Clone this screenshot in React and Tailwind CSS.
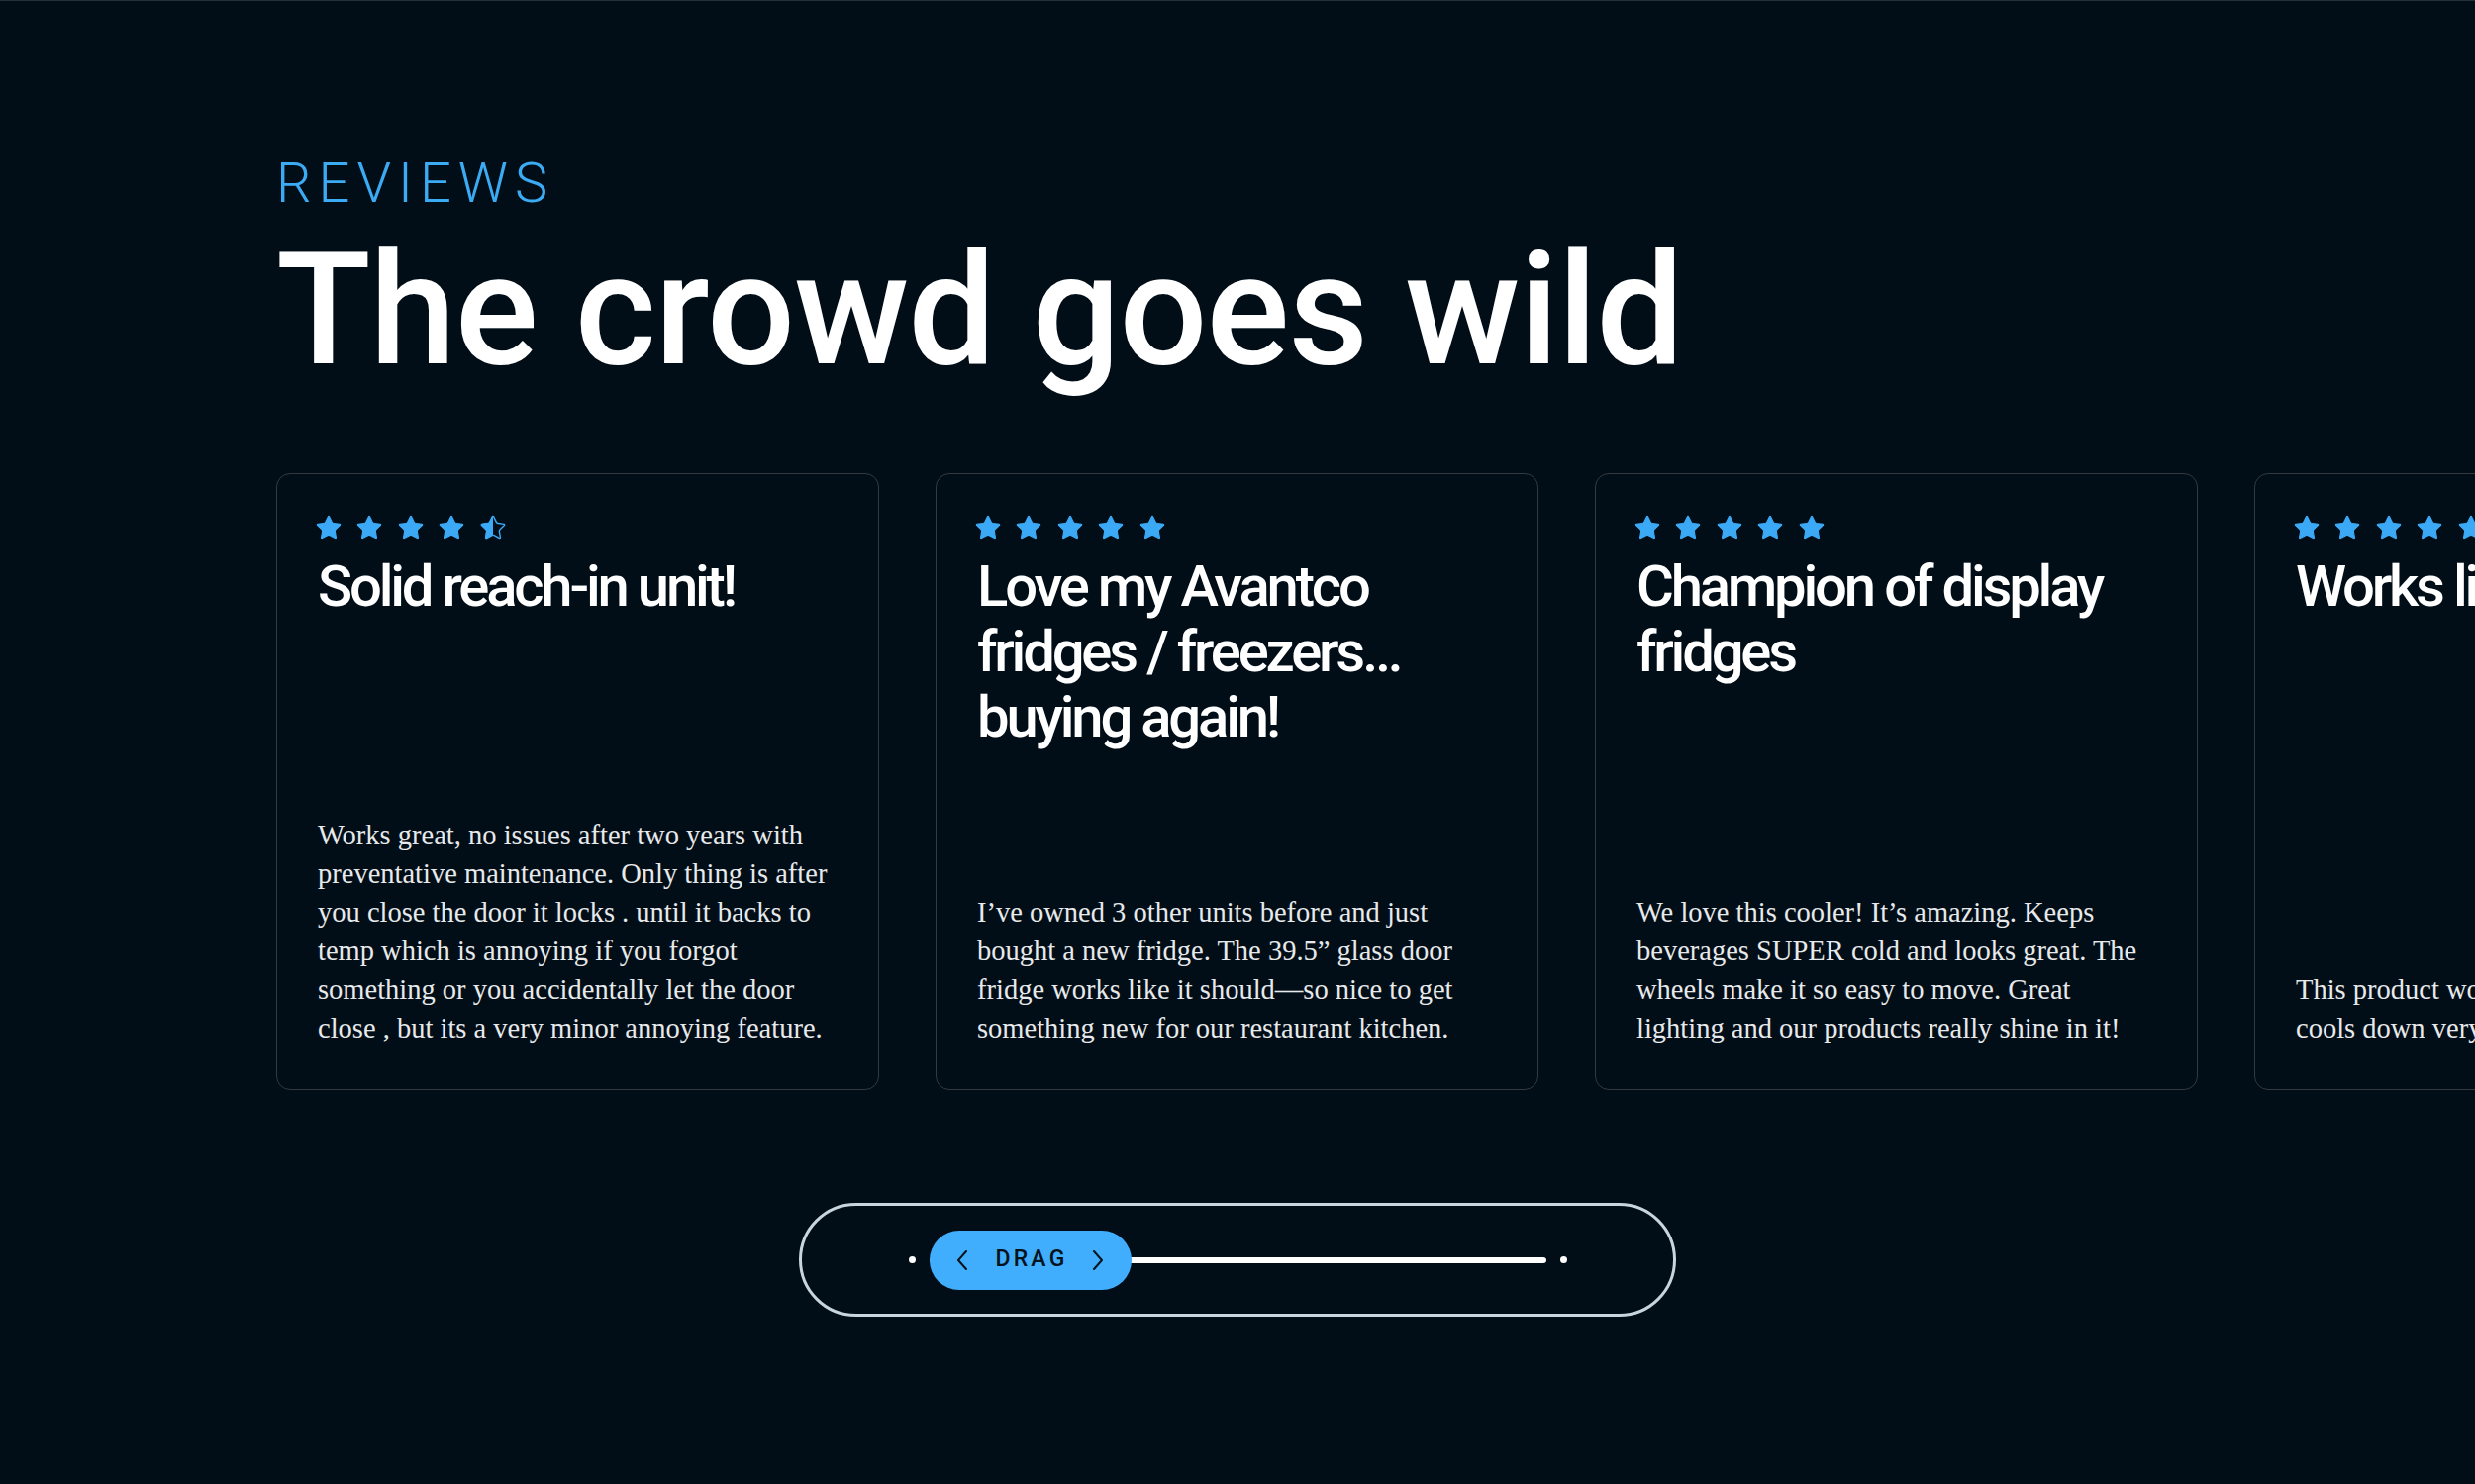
import React from 'react';

const REVIEWS = [
  {
    rating: 4.5,
    title: 'Solid reach-in unit!',
    body: 'Works great, no issues after two years with preventative maintenance. Only thing is after you close the door it locks . until it backs to temp which is annoying if you forgot something or you accidentally let the door close , but its a very minor annoying feature.',
  },
  {
    rating: 5,
    title: 'Love my Avantco fridges / freezers… buying again!',
    body: 'I’ve owned 3 other units before and just bought a new fridge. The 39.5” glass door fridge works like it should—so nice to get something new for our restaurant kitchen.',
  },
  {
    rating: 5,
    title: 'Champion of display fridges',
    body: 'We love this cooler! It’s amazing. Keeps beverages SUPER cold and looks great. The wheels make it so easy to move. Great lighting and our products really shine in it!',
  },
  {
    rating: 5,
    title: 'Works like a charm',
    body: ['This product works great and', 'cools down very quickly.'],
  },
];

const STAR_D =
  'M11.525 2.295a.53.53 0 0 1 .95 0l2.31 4.679a2.123 2.123 0 0 0 1.595 1.16l5.166.756a.53.53 0 0 1 .294.904l-3.736 3.638a2.123 2.123 0 0 0-.611 1.878l.882 5.14a.53.53 0 0 1-.771.56l-4.618-2.428a2.122 2.122 0 0 0-1.973 0L6.396 21.01a.53.53 0 0 1-.77-.56l.881-5.139a2.122 2.122 0 0 0-.611-1.879L2.16 9.795a.53.53 0 0 1 .294-.906l5.165-.755a2.122 2.122 0 0 0 1.597-1.16z';

function Star({ half, id }) {
  if (half) {
    return (
      <svg width="28" height="28" viewBox="0 0 24 24" className="shrink-0">
        <defs>
          <clipPath id={id}>
            <rect x="0" y="0" width="12" height="24" />
          </clipPath>
        </defs>
        <path d={STAR_D} fill="none" stroke="#3ba9f5" strokeWidth="1.2" strokeLinejoin="round" />
        <path d={STAR_D} fill="#3ba9f5" stroke="#3ba9f5" strokeWidth="1" clipPath={`url(#${id})`} />
      </svg>
    );
  }
  return (
    <svg width="28" height="28" viewBox="0 0 24 24" className="shrink-0">
      <path d={STAR_D} fill="#3ba9f5" stroke="#3ba9f5" strokeWidth="1" strokeLinejoin="round" />
    </svg>
  );
}

function Stars({ rating, idx }) {
  return (
    <div className="flex items-center gap-[13.4px] -ml-[3px] -mt-[3px]">
      {[0, 1, 2, 3, 4].map(i => (
        <Star key={i} half={rating - i > 0 && rating - i < 1} id={`half-${idx}-${i}`} />
      ))}
    </div>
  );
}

function ReviewCard({ review, idx }) {
  return (
    <div className="flex flex-col w-[609px] h-[623px] shrink-0 rounded-[14px] border border-[#34393e] pl-[41px] pr-[40px] pt-[43px] pb-[42px]">
      <Stars rating={review.rating} idx={idx} />
      <h3 className="mt-[12px] text-[58px] leading-[66px] font-medium tracking-[-0.055em] text-white font-['Roboto',sans-serif]">
        {review.title}
      </h3>
      <p className="mt-auto text-[28.5px] leading-[39px] text-[#e7e9eb] font-['Liberation_Serif',serif]">
        {Array.isArray(review.body)
          ? review.body.map((line, i) => (
              <React.Fragment key={i}>
                {line}
                {i < review.body.length - 1 && <br />}
              </React.Fragment>
            ))
          : review.body}
      </p>
    </div>
  );
}

function Chevron({ dir }) {
  return (
    <svg width="12" height="20" viewBox="0 0 12 20" fill="none" stroke="#06131d" strokeWidth="2" strokeLinecap="round" strokeLinejoin="round">
      {dir === 'left' ? <polyline points="10 1 2 10 10 19" /> : <polyline points="2 1 10 10 2 19" />}
    </svg>
  );
}

function DragSlider() {
  return (
    <div className="flex justify-center mt-[114px]">
      <div className="flex items-center justify-center w-[886px] h-[115px] rounded-full border-[3px] border-[#c9d4de]">
        <span className="w-[7px] h-[7px] rounded-full bg-white" />
        <div className="relative ml-[14px] w-[623px] h-[60px] flex items-center">
          <div className="w-full h-[6px] rounded-full bg-white" />
          <div className="absolute left-0 top-0 h-[60px] w-[204px] rounded-full bg-[#40aefc] flex items-center justify-center gap-[24px]">
            <Chevron dir="left" />
            <span className="text-[23px] font-medium tracking-[0.14em] text-[#06131d] font-['Roboto',sans-serif] pl-[3px]">DRAG</span>
            <Chevron dir="right" />
          </div>
        </div>
        <span className="ml-[14px] w-[7px] h-[7px] rounded-full bg-white" />
      </div>
    </div>
  );
}

export default function App() {
  return (
    <div className="min-h-screen w-full overflow-hidden bg-[#010e17] border-t border-[#25313a]">
      <section className="pl-[279px] pt-[156px]">
        <p className="text-[56px] leading-[56px] font-light tracking-[0.125em] text-[#3babf4] font-['Roboto',sans-serif]">
          REVIEWS
        </p>
        <h2 className="mt-[22px] text-[157px] leading-[157px] font-medium tracking-[-0.007em] text-white font-['Roboto',sans-serif] whitespace-nowrap">
          The crowd goes wild
        </h2>
        <div className="mt-[86px] flex gap-[57px]">
          {REVIEWS.map((r, i) => (
            <ReviewCard key={i} review={r} idx={i} />
          ))}
        </div>
      </section>
      <DragSlider />
    </div>
  );
}
